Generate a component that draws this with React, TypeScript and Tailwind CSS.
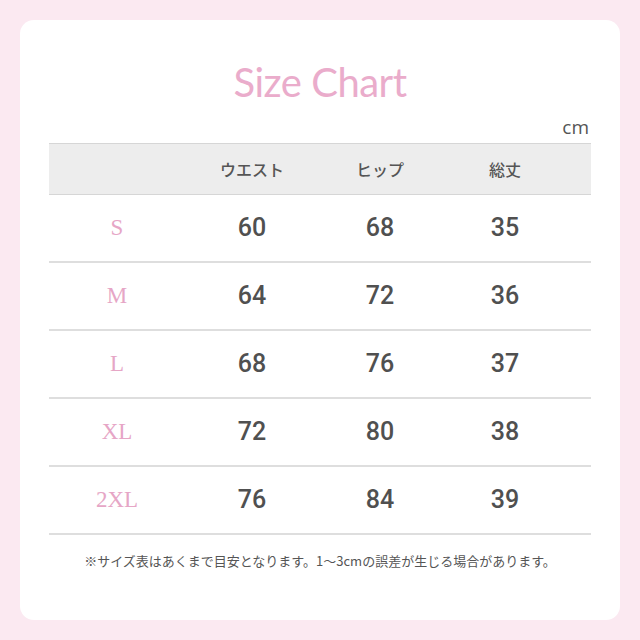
import React from 'react';

const rows = [
  { size: 'S', waist: 60, hip: 68, length: 35 },
  { size: 'M', waist: 64, hip: 72, length: 36 },
  { size: 'L', waist: 68, hip: 76, length: 37 },
  { size: 'XL', waist: 72, hip: 80, length: 38 },
  { size: '2XL', waist: 76, hip: 84, length: 39 },
];

const cols = 'grid grid-cols-[136px_134px_122px_128px_1fr]';
const jp = { fontFamily: '"Noto Sans CJK JP", "Noto Sans", sans-serif' };

export default function App() {
  return (
    <div className="w-[640px] h-[640px] bg-[#fbe9f1] p-5">
      <div className="h-full w-full bg-white rounded-[14px] flex flex-col px-[29px] pt-[38px]">
        <h1
          className="text-center text-[40px] leading-[48px] text-[#eaaccb] tracking-[-0.5px]"
          style={{ fontFamily: 'Lato, sans-serif' }}
        >
          Size Chart
        </h1>
        <div className="text-right pr-[2px] text-[19px] leading-[22px] text-[#555] mt-[10px]" style={{ fontFamily: '"Open Sans", sans-serif' }}>
          cm
        </div>
        <div className="mt-[5px]">
          <div
            className={`${cols} h-[52px] items-center bg-[#ededed] border-y border-[#d6d6d6] text-[16px] font-medium text-[#555]`}
            style={jp}
          >
            <div />
            <div className="text-center">ウエスト</div>
            <div className="text-center">ヒップ</div>
            <div className="text-center">総丈</div>
          </div>
          {rows.map((r) => (
            <div key={r.size} className={`${cols} h-[68px] items-center border-b-2 border-[#dedede]`}>
              <div className="text-center text-[23px] text-[#e6a6c6]" style={{ fontFamily: '"Liberation Serif", serif' }}>
                {r.size}
              </div>
              {[r.waist, r.hip, r.length].map((v, i) => (
                <div
                  key={i}
                  className="text-center text-[25px] font-medium text-[#505050]"
                  style={{ fontFamily: 'Roboto, sans-serif' }}
                >
                  {v}
                </div>
              ))}
            </div>
          ))}
        </div>
        <p className="text-center text-[13px] text-[#555] mt-[16px]" style={jp}>
          ※サイズ表はあくまで目安となります。1～3cmの誤差が生じる場合があります。
        </p>
      </div>
    </div>
  );
}
